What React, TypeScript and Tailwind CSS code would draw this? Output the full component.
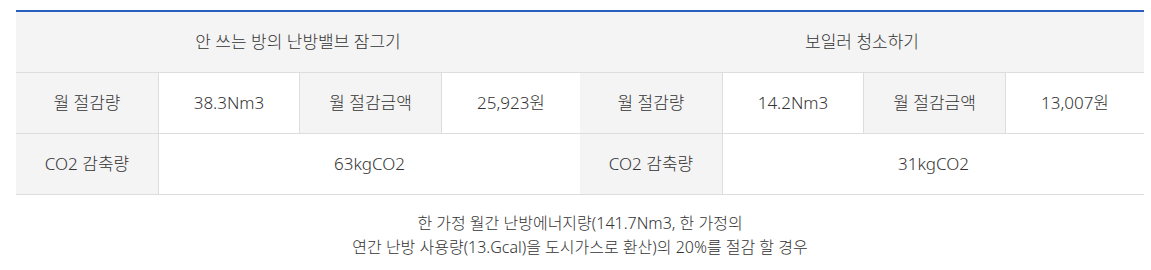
import React from 'react';

const cell = 'h-[61px] flex items-center justify-center border-b border-[#dddddd]';
const label = `${cell} bg-[#f4f4f4]`;
const value = `${cell} bg-white`;

const SavingsTable = () => {
    return (
        <div className="pl-4 pr-[7px] pt-[10px] font-light text-[#333333]" style={{ fontFamily: '"Noto Sans", "Noto Sans CJK KR", sans-serif' }}>
            <div className="grid grid-cols-[142px_141px_142px_139px_142px_141px_142px_139px] border-t-2 border-[#2a5fc1] text-[17px]">
                {/* Header */}
                <div className={`${label} col-span-4`}>안 쓰는 방의 난방밸브 잠그기</div>
                <div className={`${label} col-span-4`}>보일러 청소하기</div>

                {/* Monthly savings */}
                <div className={label}>월 절감량</div>
                <div className={`${value} border-l`}>38.3Nm3</div>
                <div className={`${label} border-l`}>월 절감금액</div>
                <div className={`${value} border-l`}>25,923원</div>
                <div className={label}>월 절감량</div>
                <div className={`${value} border-l`}>14.2Nm3</div>
                <div className={`${label} border-l`}>월 절감금액</div>
                <div className={`${value} border-l`}>13,007원</div>

                {/* CO2 */}
                <div className={label}>CO2 감축량</div>
                <div className={`${value} col-span-3 border-l`}>63kgCO2</div>
                <div className={label}>CO2 감축량</div>
                <div className={`${value} col-span-3 border-l`}>31kgCO2</div>
            </div>
            <p className="mt-4 text-center text-[16px] leading-6">
                한 가정 월간 난방에너지량(141.7Nm3, 한 가정의
                <br />
                연간 난방 사용량(13.Gcal)을 도시가스로 환산)의 20%를 절감 할 경우
            </p>
        </div>
    );
};

export default function App() {
    return <SavingsTable />;
}
